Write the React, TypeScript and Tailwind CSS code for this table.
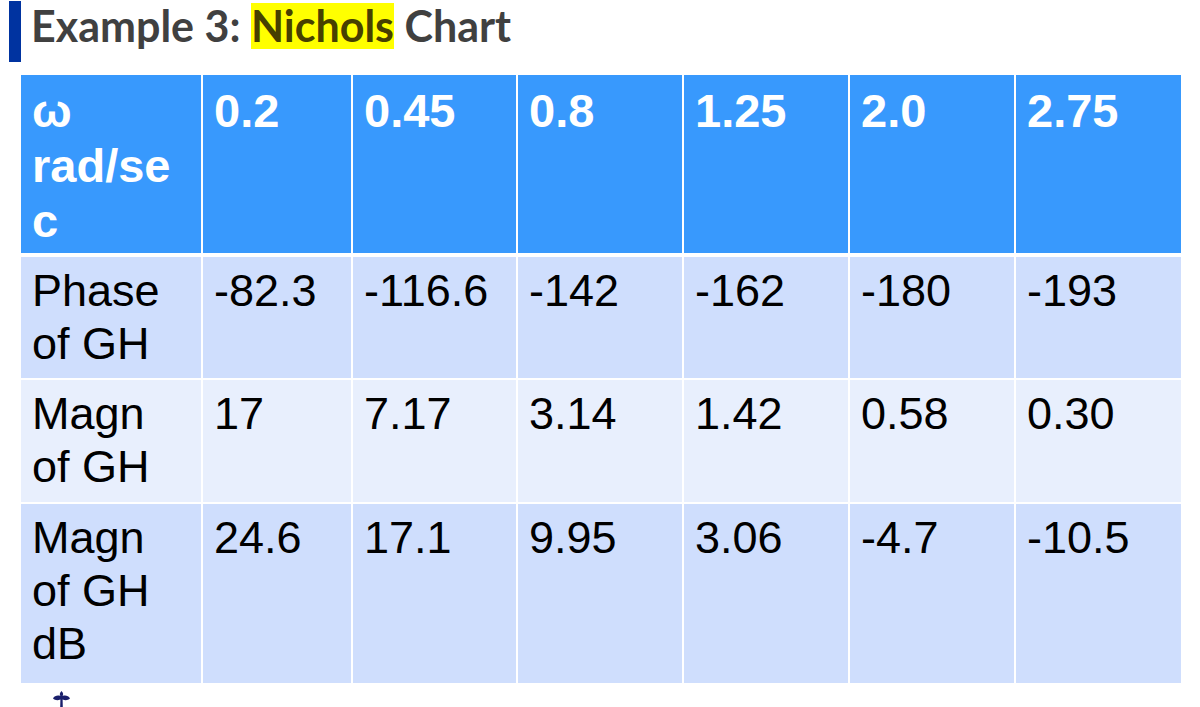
import React from 'react';

const header = ['0.2', '0.45', '0.8', '1.25', '2.0', '2.75'];

const rows: { cells: string[]; bg: string; h: string }[] = [
  { cells: ['Phase of GH', '-82.3', '-116.6', '-142', '-162', '-180', '-193'], bg: 'bg-[#cfdefd]', h: 'h-[121px]' },
  { cells: ['Magn of GH', '17', '7.17', '3.14', '1.42', '0.58', '0.30'], bg: 'bg-[#e8effd]', h: 'h-[122px]' },
  { cells: ['Magn of GH dB', '24.6', '17.1', '9.95', '3.06', '-4.7', '-10.5'], bg: 'bg-[#cfdefd]', h: 'h-[179px]' },
];

const cols = 'grid grid-cols-[180px_148px_163px_164px_164px_164px_165px] gap-x-[2px]';

const App: React.FC = () => {
  return (
    <div className="w-[1200px] h-[707px] overflow-hidden bg-white relative">
      {/* title */}
      <div className="flex items-start h-[62px] pl-[9px] pt-px">
        <div className="w-[12px] h-[61px] bg-[#0033a0]" />
        <h1
          className="ml-[10px] mt-[2px] text-[43px] leading-[46px] font-bold text-[#404040] whitespace-nowrap"
          style={{ fontFamily: 'Lato, "Open Sans", sans-serif' }}
        >
          Example 3:{' '}
          <span className="bg-[#ffff00] text-[#474000] inline-block">Nichols</span> Chart
        </h1>
      </div>

      {/* table */}
      <div
        className="ml-[21px] mt-[13px] w-[1160px]"
        style={{ fontFamily: '"Liberation Sans", Arial, sans-serif' }}
      >
        <div className={`${cols} h-[178px]`}>
          <div className="bg-[#3899fd] text-white font-bold text-[47px] leading-[55px] pt-[8px] pl-[11px] pr-[16px]">
            <div>ω</div>
            <div className="break-all">rad/sec</div>
          </div>
          {header.map((t, i) => (
            <div
              key={i}
              className="bg-[#3899fd] text-white font-bold text-[47px] leading-[55px] pt-[8px] pl-[11px] pr-[6px]"
            >
              {t}
            </div>
          ))}
        </div>
        <div className="flex flex-col gap-y-[2px] mt-[4px]">
          {rows.map((r, ri) => (
            <div key={ri} className={`${cols} ${r.h}`}>
              {r.cells.map((c, ci) => (
                <div
                  key={ci}
                  className={`${r.bg} text-black text-[45px] leading-[53px] pt-[7px] pl-[11px] ${ci === 0 ? 'pr-[14px]' : 'pr-[4px]'}`}
                >
                  {c}
                </div>
              ))}
            </div>
          ))}
        </div>
      </div>

      {/* cut-off footer logo */}
      <div className="absolute left-[53px] top-[691px]">
        <svg width="17" height="16" viewBox="0 0 17 16">
          <path
            d="M8.5 0 C10.5 2 10.5 3.5 9.6 5 C12 4 15.5 4.5 17 7.5 C15 9.5 12 9.5 9.6 8.5 L9.8 16 L7.2 16 L7.4 8.5 C5 9.5 2 9.5 0 7.5 C1.5 4.5 5 4 7.4 5 C6.5 3.5 6.5 2 8.5 0 Z"
            fill="#1a1f6b"
          />
        </svg>
      </div>
    </div>
  );
};

export default App;
